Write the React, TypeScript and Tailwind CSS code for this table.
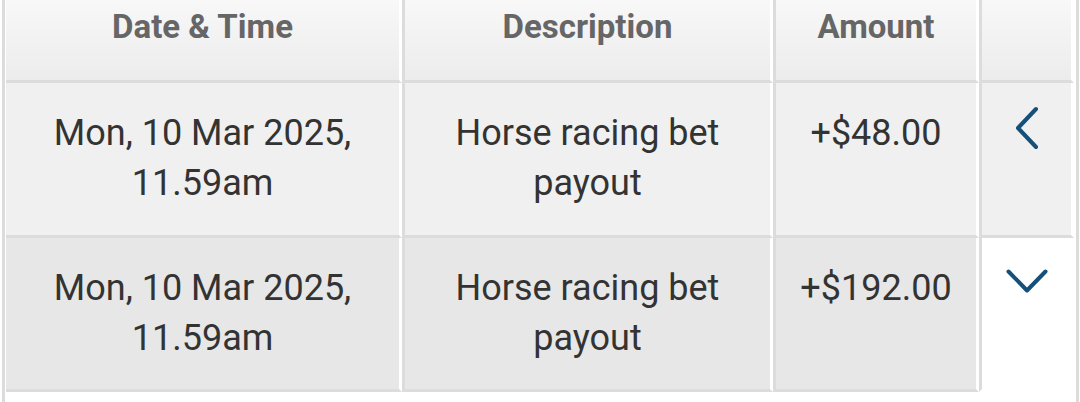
import React from "react";

const font = { fontFamily: "Roboto, 'Noto Sans', Arial, sans-serif" };

function ChevronLeft() {
  return (
    <svg width="50" height="50" viewBox="0 0 50 50" fill="none">
      <polyline points="34,6 16,25 34,44" stroke="#14507a" strokeWidth="4" strokeLinecap="round" strokeLinejoin="round" />
    </svg>
  );
}

function ChevronDown() {
  return (
    <svg width="50" height="50" viewBox="0 0 50 50" fill="none">
      <polyline points="6.5,15.5 25,34.5 43.5,15.5" stroke="#14507a" strokeWidth="4" strokeLinecap="round" strokeLinejoin="round" />
    </svg>
  );
}

type Row = { date: [string, string]; desc: [string, string]; amount: string };

const rows: Row[] = [
  { date: ["Mon, 10 Mar 2025,", "11.59am"], desc: ["Horse racing bet", "payout"], amount: "+$48.00" },
  { date: ["Mon, 10 Mar 2025,", "11.59am"], desc: ["Horse racing bet", "payout"], amount: "+$192.00" },
];

export default function App() {
  return (
    <div className="w-[1080px] h-[402px] bg-white overflow-hidden pl-[2px] pr-[1px]" style={font}>
      <div className="h-full border-l-[3px] border-r-[3px] border-[#dcdcdc] pl-[1px] pr-[2px]">
        <div className="grid grid-cols-[396px_371px_206px_95px]">
          {["Date & Time", "Description", "Amount", ""].map((h, i) => (
            <div
              key={i}
              className={
                "h-[83px] bg-linear-to-b from-[#f8f8f8] to-[#ececec] border-b-[3px] border-b-[#dcdcdc] border-r-[3px] border-r-white text-center text-[33px] leading-[44px] font-bold text-[#666666] pt-[5px] " +
                (i > 0 ? "border-l-[3px] border-l-[#dcdcdc]" : "")
              }
            >
              {h}
            </div>
          ))}
          {rows.map((r, ri) => {
            const bg = ri === 0 ? "bg-[#f0f0f0]" : "bg-[#e7e7e7]";
            const h = ri === 0 ? "h-[155px]" : "h-[154px]";
            const cell =
              h +
              " " +
              bg +
              " border-b-[3px] border-b-[#dcdcdc] border-r-[3px] border-r-white text-center text-[36px] leading-[50px] text-[#333333] pt-[25px]";
            return (
              <React.Fragment key={ri}>
                <div className={cell}>
                  <div>{r.date[0]}</div>
                  <div>{r.date[1]}</div>
                </div>
                <div className={cell + " border-l-[3px] border-l-[#dcdcdc]"}>
                  <div>{r.desc[0]}</div>
                  <div>{r.desc[1]}</div>
                </div>
                <div className={cell + " border-l-[3px] border-l-[#dcdcdc]"}>
                  <div>{r.amount}</div>
                </div>
                <div
                  className={
                    h +
                    " border-l-[3px] border-l-[#dcdcdc] border-r-[3px] border-r-white flex justify-center " +
                    (ri === 0
                      ? "bg-[#f0f0f0] border-b-[3px] border-b-[#dcdcdc] pt-[20px]"
                      : "bg-white border-b-[3px] border-b-white pt-[18px]")
                  }
                >
                  {ri === 0 ? <ChevronLeft /> : <ChevronDown />}
                </div>
              </React.Fragment>
            );
          })}
        </div>
      </div>
    </div>
  );
}
